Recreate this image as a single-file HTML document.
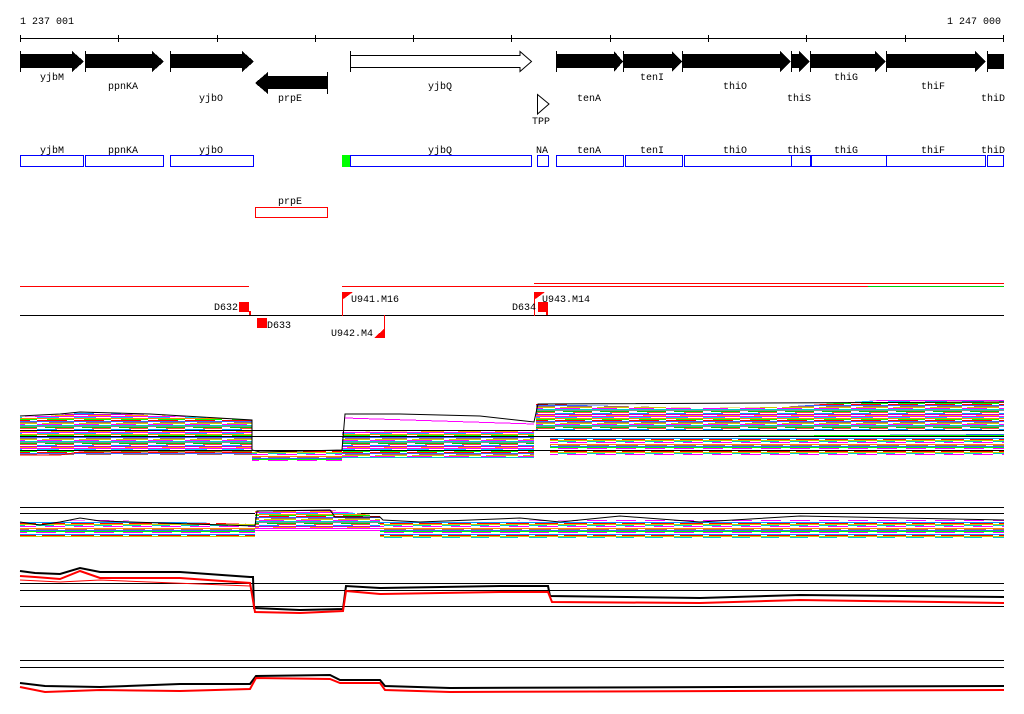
<!DOCTYPE html>
<html><head><meta charset="utf-8"><style>
html,body{margin:0;padding:0;background:#fff;width:1024px;height:714px;overflow:hidden}
text{font-family:"Liberation Mono",monospace;font-size:10px;fill:#000}
</style></head><body>
<svg width="1024" height="714" viewBox="0 0 1024 714" xmlns="http://www.w3.org/2000/svg" shape-rendering="crispEdges">
<defs>
<pattern id="mc" patternUnits="userSpaceOnUse" width="37" height="16">
<rect width="37" height="16" fill="#fff"/>
<rect y="0" width="37" height="1" fill="#f0f"/><rect y="1" width="22" height="1" fill="#0cf"/>
<rect y="2" width="37" height="1" fill="#f80"/><rect x="10" y="3" width="27" height="1" fill="#0f0"/>
<rect y="4" width="30" height="1" fill="#f00"/><rect y="5" width="37" height="1" fill="#36f"/>
<rect x="12" y="6" width="25" height="1" fill="#a66"/><rect x="5" y="7" width="32" height="1" fill="#cc0"/>
<rect y="8" width="25" height="1" fill="#f0f"/><rect y="9" width="37" height="1" fill="#0cc"/>
<rect y="10" width="37" height="1" fill="#888"/><rect x="8" y="11" width="29" height="1" fill="#0c0"/>
<rect x="18" y="12" width="19" height="1" fill="#f44"/><rect y="13" width="20" height="1" fill="#09f"/>
<rect y="14" width="37" height="1" fill="#c0c"/><rect x="14" y="15" width="23" height="1" fill="#fa0"/>
</pattern>
<pattern id="mc2" patternUnits="userSpaceOnUse" width="29" height="12" x="7" y="3">
<rect width="29" height="12" fill="#fff"/>
<rect y="0" width="29" height="1" fill="#0f0"/><rect y="1" width="20" height="1" fill="#f0f"/>
<rect y="3" width="29" height="1" fill="#09f"/><rect x="6" y="4" width="23" height="1" fill="#f00"/>
<rect y="5" width="29" height="1" fill="#cc0"/><rect y="6" width="18" height="1" fill="#0cc"/>
<rect x="9" y="7" width="20" height="1" fill="#f0f"/><rect y="9" width="29" height="1" fill="#f80"/>
<rect y="10" width="22" height="1" fill="#a66"/><rect y="11" width="29" height="1" fill="#36f"/>
</pattern>
</defs>

<text x="20" y="24">1 237 001</text>
<text x="1001" y="24" text-anchor="end">1 247 000</text>
<line x1="20" y1="38.5" x2="1004" y2="38.5" stroke="#000"/>
<g stroke="#000">
<line x1="20.5" y1="35" x2="20.5" y2="42"/><line x1="118.5" y1="35" x2="118.5" y2="42"/>
<line x1="217.5" y1="35" x2="217.5" y2="42"/><line x1="315.5" y1="35" x2="315.5" y2="42"/>
<line x1="413.5" y1="35" x2="413.5" y2="42"/><line x1="511.5" y1="35" x2="511.5" y2="42"/>
<line x1="610.5" y1="35" x2="610.5" y2="42"/><line x1="708.5" y1="35" x2="708.5" y2="42"/>
<line x1="806.5" y1="35" x2="806.5" y2="42"/><line x1="905.5" y1="35" x2="905.5" y2="42"/>
<line x1="1003.5" y1="35" x2="1003.5" y2="42"/>
</g>

<g fill="#000" stroke="none">
<polygon points="20,54 72,54 72,51 84,61.5 72,72 72,68 20,68"/>
<polygon points="85,54 152,54 152,51 164,61.5 152,72 152,68 85,68"/>
<polygon points="170,54 242,54 242,51 254,61.5 242,72 242,68 170,68"/>
<polygon points="327,76 268,76 268,72 255,83 268,94 268,89 327,89"/>
<polygon points="556,54 614,54 614,51 623,61.5 614,72 614,68 556,68"/>
<polygon points="623,54 672,54 672,51 682,61.5 672,72 672,68 623,68"/>
<polygon points="682,54 780,54 780,51 791,61.5 780,72 780,68 682,68"/>
<polygon points="791,54 799,54 799,51 801,54 801,54 801,68 799,72 799,68 791,68"/>
<polygon points="799,51 810,61.5 799,72"/>
<polygon points="810,54 875,54 875,51 886,61.5 875,72 875,68 810,68"/>
<polygon points="886,54 975,54 975,51 986,61.5 975,72 975,68 886,68"/>
<rect x="987" y="54" width="17" height="15"/>
</g>
<g stroke="#000" stroke-width="1">
<line x1="20.5" y1="51" x2="20.5" y2="72"/><line x1="85.5" y1="51" x2="85.5" y2="72"/>
<line x1="170.5" y1="51" x2="170.5" y2="72"/><line x1="327.5" y1="72" x2="327.5" y2="94"/>
<line x1="350.5" y1="51" x2="350.5" y2="72"/><line x1="556.5" y1="51" x2="556.5" y2="72"/>
<line x1="623.5" y1="51" x2="623.5" y2="72"/><line x1="682.5" y1="51" x2="682.5" y2="72"/>
<line x1="791.5" y1="51" x2="791.5" y2="72"/><line x1="810.5" y1="51" x2="810.5" y2="72"/>
<line x1="886.5" y1="51" x2="886.5" y2="72"/><line x1="987.5" y1="51" x2="987.5" y2="72"/>
</g>
<polygon points="350.5,55.5 520,55.5 520,51.5 531.5,61.5 520,71.5 520,67.5 350.5,67.5" fill="#fff" stroke="#000" shape-rendering="auto"/>
<polygon points="537.5,94.5 549,104 537.5,114" fill="#fff" stroke="#000" shape-rendering="auto"/>
<g text-anchor="middle">
<text x="52" y="80">yjbM</text><text x="123" y="89">ppnKA</text><text x="211" y="101">yjbO</text>
<text x="290" y="101">prpE</text><text x="440" y="89">yjbQ</text><text x="589" y="101">tenA</text>
<text x="652" y="80">tenI</text><text x="735" y="89">thiO</text><text x="799" y="101">thiS</text>
<text x="846" y="80">thiG</text><text x="933" y="89">thiF</text><text x="993" y="101">thiD</text>
<text x="541" y="124">TPP</text>
</g>

<g fill="none" stroke="#00f">
<rect x="20.5" y="155.5" width="63" height="11"/><rect x="85.5" y="155.5" width="78" height="11"/>
<rect x="170.5" y="155.5" width="83" height="11"/><rect x="350.5" y="155.5" width="181" height="11"/>
<rect x="537.5" y="155.5" width="11" height="11"/><rect x="556.5" y="155.5" width="67" height="11"/>
<rect x="625.5" y="155.5" width="57" height="11"/><rect x="684.5" y="155.5" width="107" height="11"/>
<rect x="791.5" y="155.5" width="19" height="11"/><rect x="811.5" y="155.5" width="75" height="11"/>
<rect x="886.5" y="155.5" width="99" height="11"/><rect x="987.5" y="155.5" width="16" height="11"/>
</g>
<rect x="342" y="155" width="8" height="12" fill="#0f0"/>
<rect x="255.5" y="207.5" width="72" height="10" fill="none" stroke="#f00"/>
<g text-anchor="middle">
<text x="52" y="153">yjbM</text><text x="123" y="153">ppnKA</text><text x="211" y="153">yjbO</text>
<text x="440" y="153">yjbQ</text><text x="542" y="153">NA</text><text x="589" y="153">tenA</text>
<text x="652" y="153">tenI</text><text x="735" y="153">thiO</text><text x="799" y="153">thiS</text>
<text x="846" y="153">thiG</text><text x="933" y="153">thiF</text><text x="993" y="153">thiD</text>
<text x="290" y="204">prpE</text>
</g>

<line x1="20" y1="286.5" x2="249" y2="286.5" stroke="#f00"/>
<line x1="342" y1="286.5" x2="1004" y2="286.5" stroke="#f00"/>
<line x1="534" y1="283.5" x2="1004" y2="283.5" stroke="#f00"/>
<line x1="868" y1="286.5" x2="1004" y2="286.5" stroke="#0c0"/>
<line x1="20" y1="315.5" x2="1004" y2="315.5" stroke="#000"/>
<g fill="#f00">
<rect x="239" y="302" width="10" height="10"/><rect x="249" y="311" width="2" height="4"/>
<rect x="257" y="318" width="10" height="10"/>
<polygon points="342,292 353,292 342,300"/><rect x="342" y="292" width="1" height="24"/>
<polygon points="385,328 385,338 374,338"/><rect x="384" y="315" width="1" height="23"/>
<polygon points="534,292 545,292 534,300"/><rect x="534" y="292" width="1" height="24"/>
<rect x="538" y="302" width="10" height="10"/><rect x="546" y="311" width="2" height="4"/>
</g>
<text x="214" y="310">D632</text><text x="267" y="328">D633</text>
<text x="351" y="302">U941.M16</text><text x="331" y="336">U942.M4</text>
<text x="512" y="310">D634</text><text x="542" y="302">U943.M14</text>

<polygon points="20,417 60,415 80,412 150,415 252,420 252,455 20,455" fill="url(#mc)"/>
<polygon points="252,452 342,450 342,462 252,462" fill="url(#mc2)"/>
<polygon points="342,432 534,430 534,458 342,458" fill="url(#mc)"/>
<polygon points="536,404 700,408 780,407 880,400 1004,400 1004,430 536,430" fill="url(#mc)"/>
<polygon points="550,437 1004,434 1004,455 550,455" fill="url(#mc2)"/>
<polyline points="20,416 60,414 80,412 150,414 252,420 252,450 260,452 342,450 345,414 400,414 480,416 534,422 538,404 1004,402" fill="none" stroke="#000" shape-rendering="auto"/>
<polyline points="345,418 534,424" fill="none" stroke="#f0f"/>
<polyline points="20,455 60,455 80,452 252,452" fill="none" stroke="#f00"/>
<g stroke="#000"><line x1="20" y1="430.5" x2="1004" y2="430.5"/><line x1="20" y1="436.5" x2="1004" y2="436.5"/><line x1="20" y1="450.5" x2="1004" y2="450.5"/></g>

<g stroke="#000"><line x1="20" y1="507.5" x2="1004" y2="507.5"/><line x1="20" y1="513.5" x2="1004" y2="513.5"/></g>
<polygon points="20,522 100,520 255,524 255,537 20,537" fill="url(#mc2)"/>
<polygon points="255,511 330,510 380,516 380,529 255,529" fill="url(#mc)"/>
<polygon points="380,522 600,520 1004,520 1004,538 380,538" fill="url(#mc2)"/>
<polyline points="20,522 40,525 60,522 80,518 100,521 255,526 257,511 330,510 335,517 380,517 383,520 420,522 520,518 560,522 620,516 700,522 800,516 1004,520" fill="none" stroke="#000" shape-rendering="auto"/>
<line x1="255" y1="530.5" x2="380" y2="530.5" stroke="#f0f"/>

<g stroke="#000"><line x1="20" y1="583.5" x2="1004" y2="583.5"/><line x1="20" y1="590.5" x2="1004" y2="590.5"/><line x1="20" y1="606.5" x2="1004" y2="606.5"/></g>
<g fill="none" shape-rendering="auto">
<polyline points="20,571 35,573 60,574 80,568 100,572 180,572 250,577 253,577 254,608 300,610 343,609 346,586 380,588 500,586 548,586 550,596 700,598 800,595 1004,597" stroke="#000" stroke-width="2"/>
<polyline points="20,576 35,577 60,579 80,571 100,578 180,578 250,583 255,612 300,613 343,611 346,591 380,594 500,592 548,592 552,602 700,603 800,600 1004,603" stroke="#f00" stroke-width="2"/>
<polyline points="20,580 60,582 100,580 250,586" stroke="#f00"/>
</g>

<g stroke="#000"><line x1="20" y1="660.5" x2="1004" y2="660.5"/><line x1="20" y1="667.5" x2="1004" y2="667.5"/></g>
<g fill="none" shape-rendering="auto">
<polyline points="20,683 45,686 100,687 180,684 250,684 256,676 330,675 340,680 380,680 385,686 450,688 1004,686" stroke="#000" stroke-width="2"/>
<polyline points="20,687 45,692 100,690 180,691 250,689 256,678 330,679 340,683 380,683 385,690 450,692 1004,690" stroke="#f00" stroke-width="2"/>
</g>
</svg>
</body></html>
